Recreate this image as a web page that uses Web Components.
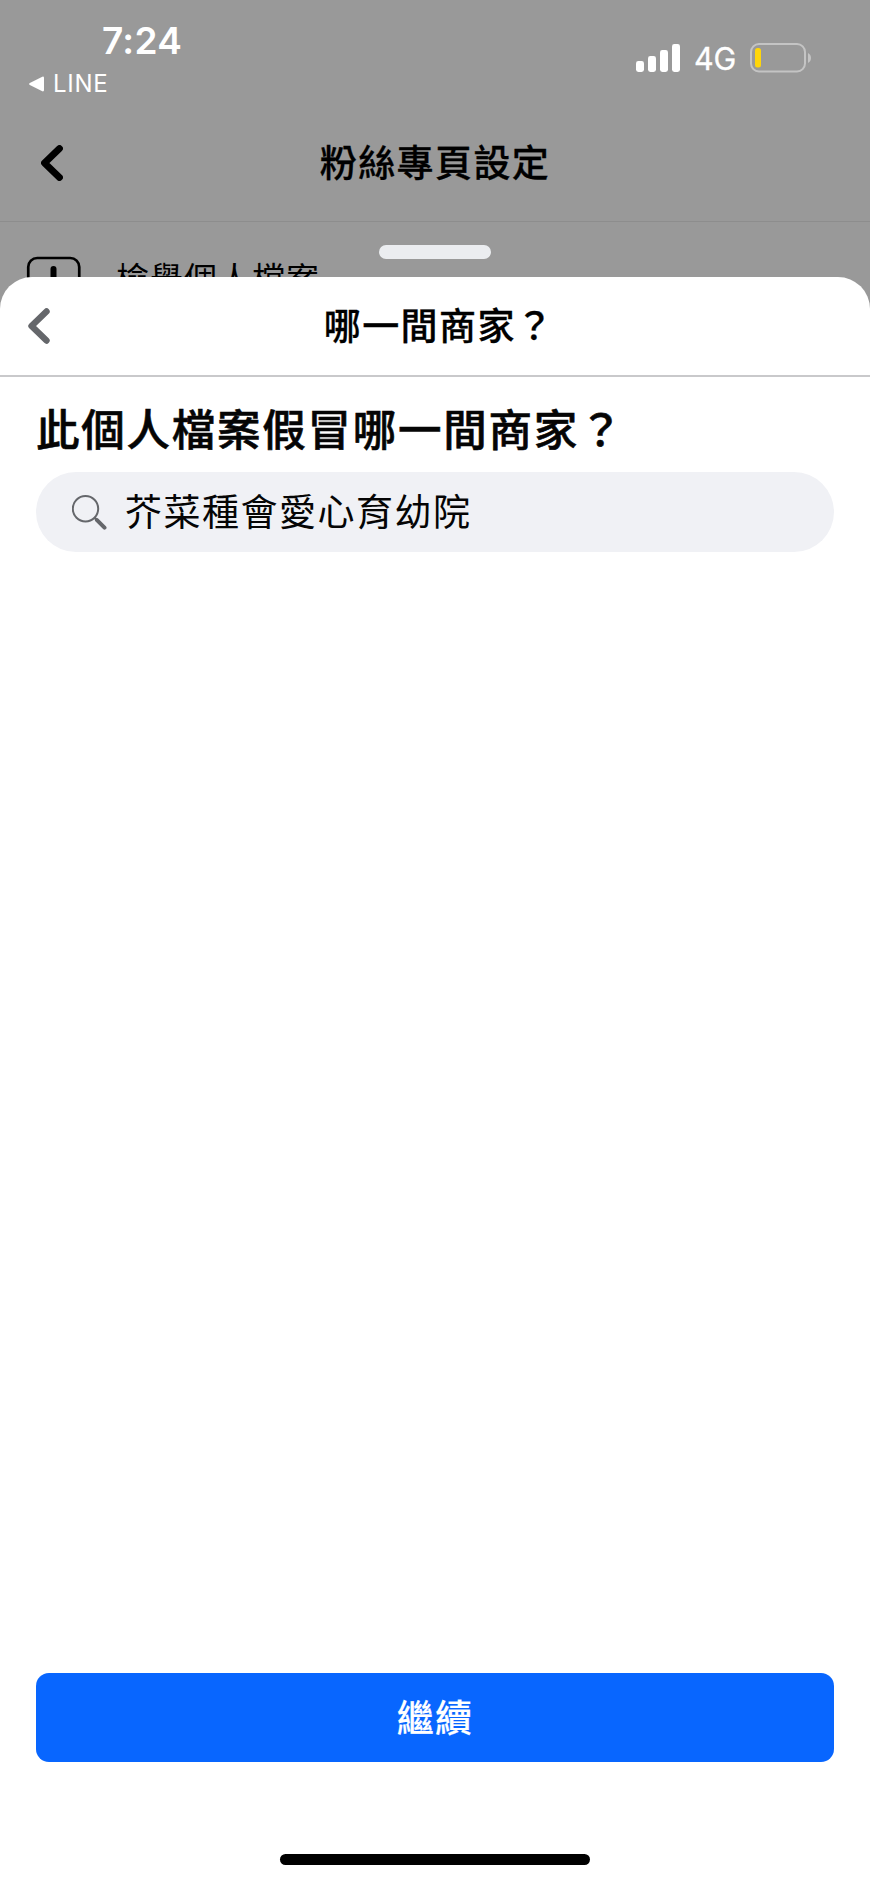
<!DOCTYPE html>
<html lang="zh-Hant">
<head>
<meta charset="utf-8">
<title>哪一間商家？</title>
<style>
body{margin:0;background:#fff;color:#050505;font-family:Inter,"Noto Sans CJK TC",sans-serif}
</style>
</head>
<body>
<report-screen>
  <settings-page slot="page">
    <status-bar time="7:24" app="LINE" network="4G"></status-bar>
    <page-header>粉絲專頁設定</page-header>
    <report-row>檢舉個人檔案</report-row>
  </settings-page>
  <bottom-sheet slot="sheet">
    <span slot="title">哪一間商家？</span>
    <span slot="question">此個人檔案假冒哪一間商家？</span>
    <search-field slot="field">芥菜種會愛心育幼院</search-field>
    <primary-button slot="action">繼續</primary-button>
  </bottom-sheet>
</report-screen>
<script>
const define = (name, html) => customElements.define(name, class extends HTMLElement {
  constructor() {
    super();
    const t = document.createElement('template');
    t.innerHTML = html;
    this.attachShadow({mode: 'open'}).append(t.content.cloneNode(true));
    this.shadowRoot.querySelectorAll('[data-attr]').forEach(e => {
      e.textContent = this.getAttribute(e.dataset.attr);
    });
  }
});

define('report-screen', `<style>
:host{display:grid;width:870px;height:1883px;overflow:hidden}
::slotted(*){grid-area:1/1;min-width:0}
</style><slot name="page"></slot><slot name="sheet"></slot>`);

define('settings-page', `<style>
:host{display:flex;flex-direction:column;height:340px;background:#999}
</style><slot></slot>`);

define('status-bar', `<style>
:host{display:flex;justify-content:space-between;height:104px;color:#fff}
.left{display:flex;flex-direction:column;padding:18px 0 0 28px}
.time{font-size:37px;font-weight:600;line-height:45px;padding-left:74px;letter-spacing:.3px}
.back{display:flex;align-items:center;gap:8px;font-size:24px;line-height:30px;margin-top:5px;letter-spacing:.7px}
.back span{padding-top:1px}
.right{display:flex;align-items:center;height:30px;padding:43px 58px 0 0}
.net{font-size:30.5px;line-height:34px;margin:2px 14px 0 14px;letter-spacing:-.2px;-webkit-text-stroke:.3px #fff}
svg{display:block;flex:none}
</style>
<div class="left"><div class="time" data-attr="time"></div>
<div class="back"><svg width="17" height="16" viewBox="0 0 17 16"><path d="M1.8 6.9 13.8.9Q16 0 16 2v12q0 2-2.2 1.1l-12-6Q0 8 1.8 6.9Z" fill="#fff"/></svg><span data-attr="app"></span></div></div>
<div class="right">
<svg width="44" height="28" viewBox="0 0 44 28" fill="#fff"><rect x="0" y="17" width="8" height="11" rx="2.4"/><rect x="12" y="12" width="8" height="16" rx="2.4"/><rect x="24" y="6" width="8" height="22" rx="2.4"/><rect x="36" y="0" width="8" height="28" rx="2.4"/></svg>
<span class="net" data-attr="network"></span>
<svg width="62" height="30" viewBox="0 0 62 30"><rect x="1" y="1" width="54" height="27.5" rx="8" fill="none" stroke="#c4c4c4" stroke-width="2"/><rect x="5" y="5" width="6" height="19.5" rx="2.5" fill="#ffd60a"/><path d="M58 10q3 1.7 3 5t-3 5z" fill="#c4c4c4"/></svg>
</div>`);

define('page-header', `<style>
:host{display:grid;grid-template-columns:80px 1fr 80px;align-items:center;height:117px;border-bottom:1px solid #8d8d8d;box-sizing:content-box}
svg{display:block;margin-left:41px}
.t{text-align:center;font-size:37px;line-height:54px;font-weight:500;letter-spacing:1.4px;color:#000;padding-top:2px;-webkit-text-stroke:.3px #000}
</style><svg width="22" height="36" viewBox="0 0 22 36"><path d="M18.5 3.5 3.5 18 18.5 32.5" fill="none" stroke="#000" stroke-width="6.8" stroke-linecap="round" stroke-linejoin="round"/></svg><div class="t"><slot></slot></div>`);

define('report-row', `<style>
:host{display:flex;align-items:flex-start;gap:35px;padding:34px 0 0 26px;color:#000;font-size:33px;line-height:40px;letter-spacing:1px}
svg{display:block}
span{margin-top:3px}
</style><svg width="55" height="54" viewBox="0 0 55 54"><rect x="2.25" y="2" width="51" height="51" rx="9" fill="none" stroke="#000" stroke-width="2.7"/><path d="M27.5 13v15" stroke="#000" stroke-width="6" stroke-linecap="round"/><circle cx="27.5" cy="39" r="3"/></svg><span><slot></slot></span>`);

define('bottom-sheet', `<style>
:host{display:flex;flex-direction:column;z-index:1}
.grab{width:112px;height:14px;border-radius:7px;background:#ebedf0;margin:245px auto 18px;flex:none}
.panel{flex:1;display:flex;flex-direction:column;background:#fff;border-radius:32px 32px 0 0}
header{display:grid;grid-template-columns:80px 1fr 80px;align-items:center;height:98px;border-bottom:2px solid #c9c9cb}
header svg{display:block;margin-left:28px}
.t{text-align:center;font-size:37px;line-height:54px;font-weight:500;letter-spacing:1.4px;color:#000;padding:2px 0 0 8px;-webkit-text-stroke:.3px #000}
main{flex:1;display:flex;flex-direction:column;padding:0 36px}
h1{margin:21px 0 10px;font-size:43.5px;line-height:64px;font-weight:500;letter-spacing:1.75px;white-space:nowrap;-webkit-text-stroke:.6px #050505}
footer{padding:0 36px 18px}
.home{width:310px;height:11px;border-radius:6px;background:#000;margin:92px auto 0}
</style><div class="grab"></div><div class="panel">
<header><svg width="22" height="36" viewBox="0 0 22 36"><path d="M18.5 3.5 3.5 18 18.5 32.5" fill="none" stroke="#65676b" stroke-width="6.4" stroke-linecap="round" stroke-linejoin="round"/></svg><div class="t"><slot name="title"></slot></div></header>
<main><h1><slot name="question"></slot></h1><slot name="field"></slot></main>
<footer><slot name="action"></slot><div class="home"></div></footer></div>`);

define('search-field', `<style>
:host{display:flex;align-items:center;gap:18px;height:80px;padding-left:36px;border-radius:40px;background:#f0f1f5;font-size:37px;line-height:54px;letter-spacing:1.5px}
svg{display:block}
span{padding-top:2px}
</style><svg width="35" height="35" viewBox="0 0 35 35" fill="none" stroke="#65676b"><circle cx="13.5" cy="13.7" r="12.7" stroke-width="2"/><path d="m22.5 22.7 3 3" stroke-width="2.4"/><path d="m25 25.2 7.5 7.5" stroke-width="4" stroke-linecap="round"/></svg><span><slot></slot></span>`);

define('primary-button', `<style>
:host{display:flex;align-items:center;justify-content:center;height:89px;box-sizing:border-box;padding-top:2px;border-radius:13px;background:#0866ff;color:#fff;font-size:37px;line-height:54px;font-weight:500;letter-spacing:1.2px;-webkit-text-stroke:.2px #fff}
</style><slot></slot>`);
</script>
</body>
</html>
